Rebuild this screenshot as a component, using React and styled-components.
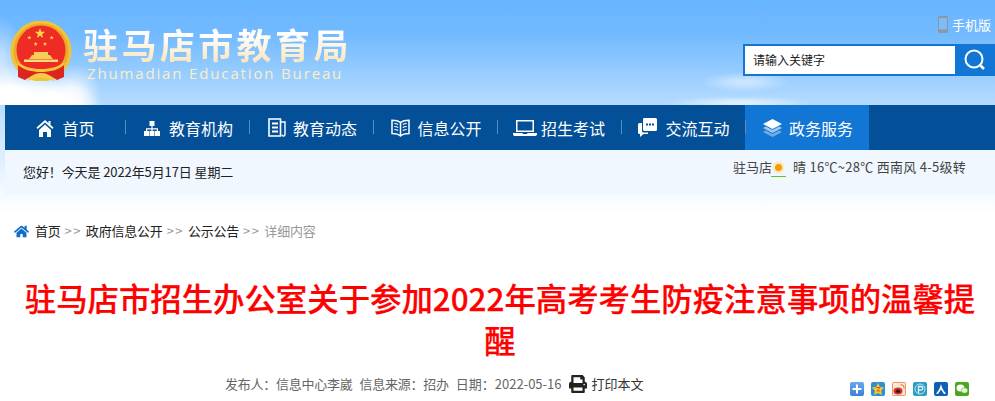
import styled, { createGlobalStyle } from 'styled-components'
import { FaHome, FaPrint } from 'react-icons/fa'

const Global = createGlobalStyle`
  html, body {
    margin: 0;
    height: 401px;
    overflow: hidden;
    background: #fff;
  }
  body {
    font-family: "Noto Sans CJK SC", "Open Sans", sans-serif;
    font-size: 13px;
    color: #333;
  }
`

const Page = styled.div`
  width: 995px;
  height: 401px;
  overflow: hidden;
  background: linear-gradient(180deg, #66b5ff 0, #73baff 35px, #b6dcff 105px, #d8ecff 150px, #f6fbff 195px, #fff 215px);
`

const Header = styled.header`
  height: 105px;
  display: flex;
  justify-content: space-between;
  background:
    radial-gradient(ellipse 50px 36px at 50px 110px, #ffffff 45%, #ffffff00 100%),
    radial-gradient(ellipse 62px 46px at 8px 108px, #ffffff 45%, #ffffff00 100%),
    radial-gradient(ellipse 24px 46px at 0 62px, #ffffff80 10%, #ffffff00 100%),
    radial-gradient(ellipse 28px 34px at 74px 98px, #ffffffc0 25%, #ffffff00 100%),
    radial-gradient(ellipse 45px 10px at 745px 82px, #ffffff70 20%, #ffffff00 100%),
    radial-gradient(ellipse 70px 7px at 740px 103px, #ffffff90 20%, #ffffff00 100%);
`

const Brand = styled.div`
  display: flex;
  padding: 21px 0 0 10px;
`

const Emblem = styled.svg`
  width: 62px;
  height: 60px;
  filter: blur(0.4px);
`

const Wordmark = styled.div`
  margin: 3px 0 0 11px;
`

const BrandName = styled.div`
  font-size: 35px;
  font-weight: 700;
  line-height: 40px;
  letter-spacing: 3.4px;
  background: linear-gradient(180deg, #ffffff 25%, #fbe6bd 95%);
  -webkit-background-clip: text;
  background-clip: text;
  color: transparent;
`

const BrandEn = styled.div`
  margin: 0 0 0 4px;
  font-family: "Open Sans", sans-serif;
  font-size: 15px;
  line-height: 18px;
  letter-spacing: 1.85px;
  color: #fbeec6;
`

const Tools = styled.div`
  width: 252px;
  display: flex;
  flex-direction: column;
  align-items: flex-end;
`

const MobileLink = styled.a`
  height: 44px;
  padding-top: 16px;
  box-sizing: border-box;
  display: flex;
  align-items: flex-start;
  gap: 4px;
  margin-right: 4px;
  font-size: 13px;
  line-height: 18px;
  color: #fff;
`

const SearchBox = styled.form`
  width: 252px;
  height: 32px;
  margin: 0;
  display: flex;
`

const SearchInput = styled.div`
  flex: 1;
  box-sizing: border-box;
  border: 2px solid #1277d4;
  border-right: 0;
  background: #fff;
  padding-left: 8px;
  font-size: 12px;
  line-height: 28px;
  color: #222;
`

const SearchButton = styled.div`
  width: 40px;
  background: #1277d4;
  display: flex;
  align-items: center;
  justify-content: center;
`

const Nav = styled.nav`
  margin-left: 5px;
  height: 45px;
  display: flex;
  background: #035098;
`

const NavItem = styled.a`
  position: relative;
  box-sizing: border-box;
  width: ${(p) => (p.$first ? '120px' : '124px')};
  padding: 0 0 0 ${(p) => p.$pl || 0}px;
  display: flex;
  align-items: center;
  justify-content: center;
  gap: ${(p) => p.$gap || 8}px;
  font-size: 16px;
  color: #fff;
  background: ${(p) => (p.$active ? '#1277d4' : 'transparent')};
  &::after {
    content: '';
    display: ${(p) => (p.$active ? 'none' : 'block')};
    position: absolute;
    z-index: 1;
    right: -1px;
    top: 15px;
    height: 14px;
    width: 1px;
    background: #5d8db9;
  }
`

const InfoBar = styled.div`
  margin-left: 5px;
  height: 45px;
  display: flex;
  justify-content: space-between;
  padding: 0 29px 0 18px;
  background: #f0f7ff;
`

const Greeting = styled.div`
  padding-top: 13px;
  font-size: 13px;
  line-height: 18px;
  letter-spacing: -0.1px;
  color: #222;
`

const Weather = styled.div`
  padding-top: 8px;
  display: flex;
  align-items: flex-start;
  font-size: 13px;
  line-height: 18px;
  color: #444;
`

const SunWrap = styled.span`
  width: 15px;
  height: 17px;
  margin: 1px 7px 0 -1px;
  border-bottom: 1px solid #63c323;
  display: flex;
  align-items: center;
  justify-content: center;
`

const Forecast = styled.span`
  letter-spacing: 0.27px;
`

const Main = styled.main`
  margin-left: 5px;
`

const Crumbs = styled.div`
  height: 73px;
  padding: 27px 0 0 9px;
  box-sizing: border-box;
  display: flex;
  align-items: flex-start;
  gap: 4px;
  font-size: 13px;
  line-height: 18px;
  letter-spacing: -0.2px;
  color: #222;
`

const HomeIcon = styled(FaHome)`
  margin: 2px 2px 0 0;
`

const CrumbSep = styled.span`
  color: #999;
  letter-spacing: 1.4px;
`

const CrumbNow = styled.span`
  color: #999;
`

const Title = styled.h1`
  margin: 9px 0 0;
  padding: 0 8px;
  font-size: 31.4px;
  font-weight: 500;
  line-height: 42px;
  text-align: center;
  color: #f00;
  -webkit-text-stroke: 0.25px #f00;
`

const MetaRow = styled.div`
  margin-top: 13px;
  display: flex;
  justify-content: space-between;
  align-items: flex-start;
  padding: 0 26px 0 220px;
`

const Meta = styled.div`
  display: flex;
  align-items: center;
  gap: 7px;
  font-size: 13px;
  line-height: 20px;
  color: #666;
`

const MetaText = styled.span`
  letter-spacing: ${(p) => (p.$tight ? '-0.25px' : '0')};
`

const PrintLink = styled.a`
  display: flex;
  align-items: center;
  gap: 5px;
  color: #333;
`

const Shares = styled.div`
  display: flex;
  gap: 7px;
  padding-top: 8px;
`

const Share = styled.svg`
  width: 14px;
  height: 14px;
  border-radius: 2px;
  background: ${(p) => p.$bg};
`

const nav = [
  {
    label: '首页',
    pl: 1,
    icon: (
      <svg width="18" height="18" viewBox="0 0 18 18" fill="#fff">
        <path d="M9 1 0.5 8.6l1.2 1.3L9 3.6l7.3 6.3 1.2-1.3-3-2.7V2h-2v2.2z" />
        <path d="M3 11 9 5.6l6 5.4V18h-4v-5H7v5H3z" />
      </svg>
    ),
  },
  {
    label: '教育机构',
    pl: 3,
    gap: 9,
    icon: (
      <svg width="16" height="16" viewBox="0 0 16 16" fill="#fff">
        <path d="M5.5 1h5v5h-5zM0 11h5v5H0zM5.5 11h5v5h-5zM11 11h5v5h-5z" />
        <path d="M7.4 6h1.2v2.2H14V11h-1.2V9.4H8.6V11H7.4V9.4H3.2V11H2V8.2h5.4z" />
      </svg>
    ),
  },
  {
    label: '教育动态',
    pl: 3,
    gap: 7,
    icon: (
      <svg width="18" height="19" viewBox="0 0 18 19" fill="none" stroke="#fff">
        <path d="M1 1h11.5v17H1z" strokeWidth="1.6" />
        <path d="M12.5 4H17v12.5a1.5 1.5 0 0 1-3 0" strokeWidth="1.4" />
        <path d="M4 5.5h6M4 9.5h6M4 13.5h6" strokeWidth="1.8" />
      </svg>
    ),
  },
  {
    label: '信息公开',
    pl: 3,
    gap: 7,
    icon: (
      <svg width="19" height="18" viewBox="0 0 19 18" fill="none" stroke="#fff">
        <path d="M9.5 3.5C7.5 1.8 4.5 1.2 1 1.2v13.4c3.5 0 6.5.6 8.5 2.4 2-1.8 5-2.4 8.5-2.4V1.2c-3.5 0-6.5.6-8.5 2.3z" strokeWidth="1.5" />
        <path d="M9.5 3.5V17" strokeWidth="1.5" />
        <path d="M3.3 4.5c1.5.1 2.7.4 3.9 1M3.3 7.5c1.5.1 2.7.4 3.9 1M3.3 10.5c1.5.1 2.7.4 3.9 1M15.7 4.5c-1.5.1-2.7.4-3.9 1M15.7 7.5c-1.5.1-2.7.4-3.9 1M15.7 10.5c-1.5.1-2.7.4-3.9 1" strokeWidth="1.2" />
      </svg>
    ),
  },
  {
    label: '招生考试',
    gap: 4,
    icon: (
      <svg width="24" height="16" viewBox="0 0 24 16" fill="#fff">
        <path fillRule="evenodd" d="M3 0h18v12H3zM4.5 1.5v9h15v-9z" />
        <path d="M0 13h9.5l.5 1h4l.5-1H24v1.5L23 16H1L0 14.5z" />
      </svg>
    ),
  },
  {
    label: '交流互动',
    pl: 2,
    icon: (
      <svg width="19" height="19" viewBox="0 0 19 19" fill="#fff">
        <path d="M4 5H1.5A1.5 1.5 0 0 0 0 6.5v8A1.5 1.5 0 0 0 1.5 16H2v3l3.5-3H10v-1.500H5.5A1.5 1.5 0 0 1 4 13z" />
        <path fillRule="evenodd" d="M6 0h11.500A1.5 1.5 0 0 1 19 1.5v10a1.5 1.5 0 0 1-1.5 1.5H6.500A1.5 1.5 0 0 1 5 11.500v-10A1.5 1.5 0 0 1 6 0zM8 5.5v2h2v-2zM11 5.5v2h2v-2zM14 5.5v2h2v-2z" />
      </svg>
    ),
  },
  {
    label: '政务服务',
    active: true,
    pl: 2,
    gap: 7,
    icon: (
      <svg width="19" height="18" viewBox="0 0 19 18" fill="#fff">
        <path d="M9.5 0 19 5 9.5 10 0 5z" />
        <path d="M2.8 7.6 9.5 11.1l6.700-3.500L19 9l-9.500 5L0 9z" fillOpacity=".6" />
        <path d="M2.8 11.6 9.5 15.1l6.700-3.500L19 13l-9.500 5L0 13z" fillOpacity=".4" />
      </svg>
    ),
  },
]

const Star = ({ x, y, r }) => {
  const pts = []
  for (let i = 0; i < 10; i++) {
    const a = (Math.PI / 5) * i - Math.PI / 2
    const d = i % 2 ? r * 0.4 : r
    pts.push(`${x + d * Math.cos(a)},${y + d * Math.sin(a)}`)
  }
  return <polygon points={pts.join(' ')} fill="#f9d648" />
}

const EmblemArt = () => (
  <Emblem viewBox="0 0 62 60">
    <circle cx="31" cy="30" r="30.5" fill="#f3c238" />
    <circle cx="31" cy="30" r="27.5" fill="#e9aa28" />
    <circle cx="31" cy="29" r="24.5" fill="#ee2b24" />
    <Star x={30} y={12.5} r={5.5} />
    <Star x={19.3} y={16.7} r={2.3} />
    <Star x={41.7} y={16.7} r={2.3} />
    <Star x={25.7} y={23} r={2.2} />
    <Star x={35} y={23} r={2.2} />
    <path d="M24 31h14v3h2l3 4H19l3-4h2z" fill="#f6cf58" />
    <path d="M14 38.5h34V41H14z" fill="#f9dc72" />
    <path d="M8 42c6 5 14 6 23 6s17-1 23-6v14l-7 3c-5-4-10-6-16-6s-11 2-16 6l-7-3z" fill="#dc2520" />
    <path d="M7 40c6 6 15 8 24 8s18-2 24-8l-1 4c-6 5-14 7-23 7s-17-2-23-7z" fill="#f3c43c" />
    <path d="M17 60c3-5 8-8 14-8s11 3 14 8c-5-2-9-3-14-3s-9 1-14 3z" fill="#f6cb45" />
  </Emblem>
)

const App = () => (
  <Page>
    <Global />
    <Header>
      <Brand>
        <EmblemArt />
        <Wordmark>
          <BrandName>驻马店市教育局</BrandName>
          <BrandEn>Zhumadian Education Bureau</BrandEn>
        </Wordmark>
      </Brand>
      <Tools>
        <MobileLink>
          <svg width="10" height="17" viewBox="0 0 10 17">
            <rect width="10" height="17" rx="1.5" fill="#8b97a3" />
            <rect x="1" y="2" width="8" height="11.5" fill="#7fbcf5" />
          </svg>
          手机版
        </MobileLink>
        <SearchBox>
          <SearchInput>请输入关键字</SearchInput>
          <SearchButton>
            <svg width="22" height="22" viewBox="0 0 22 22" fill="none" stroke="#fff">
              <circle cx="10" cy="10" r="8.5" strokeWidth="2" />
              <path d="M16.5 16.5 20 20" strokeWidth="2.5" />
            </svg>
          </SearchButton>
        </SearchBox>
      </Tools>
    </Header>
    <Nav>
      {nav.map((item, i) => (
        <NavItem
          key={item.label}
          $first={i === 0}
          $active={item.active}
          $gap={item.gap}
          $pl={item.pl}
        >
          {item.icon}
          {item.label}
        </NavItem>
      ))}
    </Nav>
    <InfoBar>
      <Greeting>您好！今天是 2022年5月17日 星期二</Greeting>
      <Weather>
        驻马店
        <SunWrap>
          <svg width="13" height="13" viewBox="0 0 13 13">
            <circle cx="6.5" cy="6.5" r="6" fill="#fde9b0" />
            <circle cx="6.5" cy="6.5" r="3.5" fill="#f59a13" />
          </svg>
        </SunWrap>
        <Forecast>晴 16℃~28℃ 西南风 4-5级转</Forecast>
      </Weather>
    </InfoBar>
    <Main>
      <Crumbs>
        <HomeIcon size={15} color="#0f6fc6" />
        <span>首页</span>
        <CrumbSep>&gt;&gt;</CrumbSep>
        <span>政府信息公开</span>
        <CrumbSep>&gt;&gt;</CrumbSep>
        <span>公示公告</span>
        <CrumbSep>&gt;&gt;</CrumbSep>
        <CrumbNow>详细内容</CrumbNow>
      </Crumbs>
      <Title>驻马店市招生办公室关于参加2022年高考考生防疫注意事项的温馨提醒</Title>
      <MetaRow>
        <Meta>
          <MetaText $tight>发布人：信息中心李崴</MetaText>
          <MetaText $tight>信息来源：招办</MetaText>
          <MetaText>日期：2022-05-16</MetaText>
          <PrintLink>
            <FaPrint size={18} color="#222" />
            打印本文
          </PrintLink>
        </Meta>
        <Shares>
          <Share $bg="linear-gradient(180deg, #6aa8ee, #3b7fd6)" viewBox="0 0 14 14">
            <path d="M6 2.5h2V6h3.5v2H8v3.5H6V8H2.5V6H6z" fill="#fff" />
          </Share>
          <Share $bg="#2f8fd8" viewBox="0 0 14 14">
            <path d="M7 .8 8.9 5l4.400.6-3.200 3 .8 4.400L7 10.900 3.100 13l.8-4.400-3.200-3L5.100 5z" fill="#f7c92c" />
            <path d="M5 5.5h4l-3 3.500h3" fill="none" stroke="#c9661b" strokeWidth="1" />
          </Share>
          <Share $bg="#fbe7d8" viewBox="0 0 14 14">
            <path d="M0 0h14v14H0z" fill="none" stroke="#ef7b45" strokeWidth="1.5" />
            <ellipse cx="6" cy="9" rx="4.5" ry="3.5" fill="#d9322b" />
            <ellipse cx="6" cy="9.3" rx="2.2" ry="1.7" fill="#222" />
            <path d="M8.5 3c2.500-.5 4 1.500 3.500 3.500" fill="none" stroke="#f08a3a" strokeWidth="1.2" />
          </Share>
          <Share $bg="#2d9cc4" viewBox="0 0 14 14">
            <circle cx="7" cy="7" r="5" fill="none" stroke="#bfe6f3" strokeWidth="1" />
            <path d="M5.5 11V4.5H8a1.800 1.800 0 0 1 0 3.600H5.500" fill="none" stroke="#e6f6fb" strokeWidth="1.3" />
          </Share>
          <Share $bg="#0f5fb3" viewBox="0 0 14 14">
            <path d="M7 2c.8 4 2.500 7 5 9.500L10 12 7 7.500 4 12l-2-.5C4.500 9 6.200 6 7 2z" fill="#fff" />
          </Share>
          <Share $bg="#49a81e" viewBox="0 0 14 14">
            <ellipse cx="5.5" cy="6" rx="4" ry="3.5" fill="#fff" />
            <ellipse cx="9.5" cy="8.5" rx="3.3" ry="2.8" fill="#e8f6df" stroke="#49a81e" strokeWidth=".6" />
          </Share>
        </Shares>
      </MetaRow>
    </Main>
  </Page>
)

export default App
